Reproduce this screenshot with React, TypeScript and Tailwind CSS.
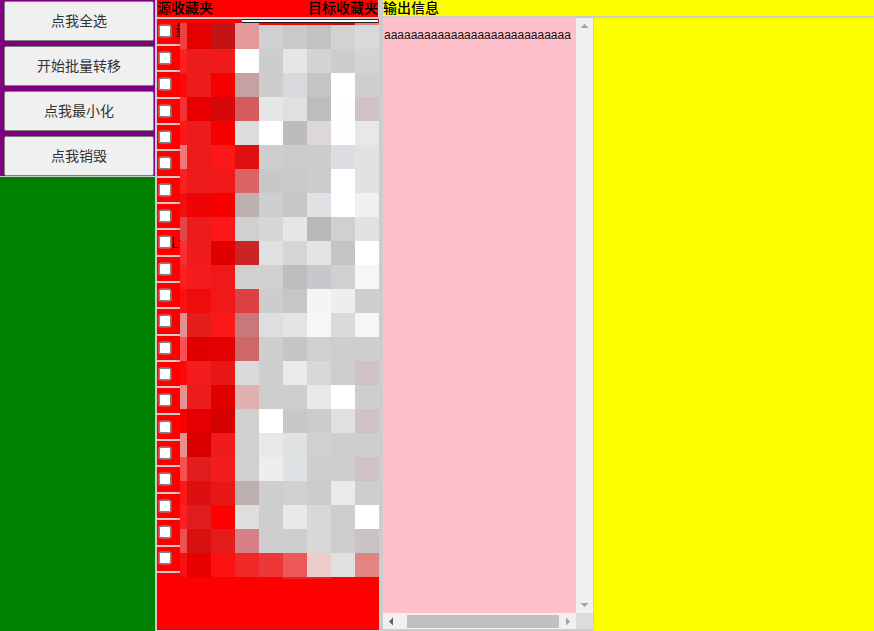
const tiles = [
  ['f04040', 'e50000', 'c21414', 'e49999', 'd0d0d0', 'c9c9c9', 'c2c2c2', 'd2d3d3', 'd9d9d9'],
  ['ff2020', 'ec1c1c', 'f01c1c', 'ffffff', 'cdcdcd', 'e6e6e4', 'd4d4d4', 'cdcdcd', 'd4d4d4'],
  ['fa0a0a', 'ec1c1c', 'f60000', 'c4a2a2', 'cdcdcd', 'd8d9dc', 'c4c4c4', 'ffffff', 'cecece'],
  ['f53030', 'e80000', 'd40808', 'd45c5c', 'e6e6e6', 'e0e0de', 'bcbdbe', 'fefefe', 'd0c2c4'],
  ['fc1818', 'ec1c1c', 'f60000', 'dcdcdc', 'ffffff', 'bcbcbc', 'dcd8d8', 'fefefe', 'e8e8e8'],
  ['f07878', 'ec1c1c', 'fc1818', 'e01010', 'cecece', 'cbcbc9', 'cccccc', 'dcdde0', 'e2e2e2'],
  ['fc2020', 'ec1c1c', 'f01818', 'dc6464', 'c8c8c8', 'c9c9c7', 'cccccc', 'ffffff', 'e2e2e2'],
  ['f01010', 'ee0404', 'f60000', 'bdb0b0', 'cecece', 'c8c7c5', 'e0e1e4', 'ffffff', 'f0f0f0'],
  ['e04848', 'ec1c1c', 'fc1818', 'd0d0d0', 'd6d6d6', 'e6e6e4', 'b8b8b6', 'd0d0d0', 'e2e2e2'],
  ['f83030', 'f01c1c', 'e00000', 'cc2424', 'e0e0e0', 'd4d6d4', 'e4e4e4', 'c4c4c4', 'ffffff'],
  ['fc2020', 'f41c1c', 'f01818', 'd0d0d0', 'd0d0d0', 'bebebc', 'c8c8cc', 'd0d0d0', 'f6f6f6'],
  ['fa1010', 'ee0c0c', 'f01818', 'dc4040', 'cdcdcd', 'c6c6c6', 'f4f5f7', 'eeeeee', 'cecece'],
  ['e09090', 'e41c1c', 'fc1818', 'c87878', 'dedede', 'e4e4e2', 'f6f6f6', 'dadada', 'f6f6f6'],
  ['fc5050', 'e00000', 'e40000', 'cc6868', 'cecece', 'c4c6c4', 'd0d0d2', 'cecece', 'cecece'],
  ['fa0a0a', 'f41c1c', 'e81818', 'dadada', 'cecece', 'eaeae8', 'd8d8d8', 'cecece', 'd0c2c4'],
  ['e89090', 'ec1c1c', 'e00000', 'e0b0b0', 'cecece', 'cecece', 'e8e8ea', 'ffffff', 'cecece'],
  ['f80000', 'e40000', 'd40000', 'd0d0d0', 'ffffff', 'c8c8c8', 'cccccc', 'e0e0e0', 'd0c2c4'],
  ['e89090', 'd80000', 'f01c1c', 'd0d0d0', 'e8e8e8', 'e0e2e0', 'ced0d2', 'cecece', 'cecece'],
  ['f85050', 'e01c1c', 'f41c1c', 'd0d0d0', 'eeeeee', 'dee2e4', 'cecece', 'cecece', 'd0c2c4'],
  ['fc1818', 'dc1010', 'e81818', 'beb0b0', 'cecece', 'd0d0ce', 'cccccc', 'eaeaea', 'cecece'],
  ['fc2020', 'e01c1c', 'ff0000', 'dedede', 'cecece', 'e8eae8', 'd8d8d8', 'cecece', 'ffffff'],
  ['f05050', 'd81010', 'e41c1c', 'd48086', 'cecece', 'cecece', 'd8d8d8', 'cecece', 'c8c4c4'],
  ['f81010', 'e80000', 'fc1010', 'f02828', 'ec3838', 'ee5858', 'eccccc', 'e0e0e0', 'e28484'],
];

const topStrip = ['f04040', 'e50000', 'c21414', 'e49999', 'ff0000', 'ff0000', 'ff0000', 'c40c0c', 'e08080'];
const bottomStrip = ['ff0000', 'ff0000', 'ff0000', 'ff0000', 'ff0000', 'f02020', 'f02020', 'ff0000', 'ff0000'];

const buttons = ['点我全选', '开始批量转移', '点我最小化', '点我销毁'];

const labels: Record<number, { text: string; className: string }> = {
  0: { text: '量', className: 'pl-[18px] -mt-[4px]' },
  8: { text: 'Lf', className: 'pl-[14px] -mt-[2px]' },
};

function TileRow({ colors, className }: { colors: string[]; className: string }) {
  return (
    <div className={`grid grid-cols-[7px_repeat(8,24px)] ${className}`}>
      {colors.map((c, i) => (
        <div key={i} style={{ backgroundColor: `#${c}` }} />
      ))}
    </div>
  );
}

function Arrow({ points, className }: { points: string; className: string }) {
  return (
    <svg width="9" height="9" viewBox="0 0 9 9" className={className}>
      <polygon points={points} />
    </svg>
  );
}

export default function App() {
  return (
    <div className="flex h-[631px] w-[874px] overflow-hidden bg-[#cccccc] font-['Noto_Sans_CJK_SC','Liberation_Sans',sans-serif] text-[14px] text-black">
      <aside className="flex w-[155px] flex-col">
        <div className="flex h-[176px] flex-col gap-[5px] bg-[#800080] pl-1 pt-px">
          {buttons.map((b) => (
            <button
              key={b}
              className="h-10 w-[150px] rounded-[2px] border border-[#808080] bg-[#f0f0f0] pb-[2px] text-[14px] leading-none text-[#333]"
            >
              {b}
            </button>
          ))}
        </div>
        <div className="mt-px flex-1 bg-[#008000]" />
      </aside>

      <section className="ml-[2px] flex h-[630px] w-[222px] flex-col">
        <div className="mr-px flex h-[17px] items-start justify-between bg-[#ff0000] font-medium leading-[14px]">
          <span>源收藏夹</span>
          <span>目标收藏夹</span>
        </div>
        <div className="mt-[2px] flex flex-1 bg-[#ff0000]">
          <ul className="w-[23px] pt-[0.65px]">
            {tiles.slice(0, 21).map((_, i) => (
              <li
                key={i}
                className="flex h-[26.35px] items-start overflow-hidden whitespace-nowrap border-b-2 border-[#cccccc] pt-[5.85px]"
              >
                <input
                  type="checkbox"
                  className="m-0 ml-[1.5px] h-[12px] w-[12px] shrink-0 appearance-none rounded-[2px] border border-[#808080] bg-white shadow-[0_0_0_0.5px_#999]"
                />
                {labels[i] && (
                  <span className={`-ml-[13.5px] leading-[16px] text-[#200] ${labels[i].className}`}>{labels[i].text}</span>
                )}
              </li>
            ))}
          </ul>
          <div className="flex w-[199px] flex-col">
            <div className="ml-[62px] h-1 w-[136px] border-y border-[#222] bg-white" />
            <TileRow colors={topStrip} className="h-[2px]" />
            {tiles.map((row, i) => (
              <TileRow key={i} colors={row} className="h-6" />
            ))}
            <TileRow colors={bottomStrip} className="h-[2px]" />
          </div>
        </div>
      </section>

      <section className="ml-1 flex h-full flex-1 flex-col">
        <div className="h-4 bg-[#ffff00] font-medium leading-[14px]">输出信息</div>
        <div className="mt-[2px] flex min-h-0 flex-1">
          <div className="mb-[2px] flex w-[210px] flex-col">
            <div className="flex min-h-0 flex-1">
              <div className="w-[193px] overflow-hidden bg-[#ffc0cb] pl-px pt-[10px] font-['Liberation_Sans',sans-serif] text-[12px] leading-[14px] text-[#111]">
                aaaaaaaaaaaaaaaaaaaaaaaaaaaa
              </div>
              <div className="flex w-[17px] flex-col items-center justify-between bg-[#f0f0f0] py-1">
                <Arrow points="4.5,2 8.5,6 0.5,6" className="fill-[#a3a3a3]" />
                <Arrow points="0.5,3 8.5,3 4.5,7" className="fill-[#a3a3a3]" />
              </div>
            </div>
            <div className="flex h-4">
              <div className="flex w-[193px] items-center bg-[#f0f0f0]">
                <Arrow points="6,0.5 6,8.5 2,4.5" className="ml-[4px] fill-[#606060]" />
                <div className="ml-[11px] h-[13px] w-[152px] bg-[#c0c0c0]" />
                <Arrow points="3,0.5 7,4.5 3,8.5" className="ml-[4px] fill-[#a3a3a3]" />
              </div>
              <div className="w-[17px] bg-[#dcdcdc]" />
            </div>
          </div>
          <div className="ml-px flex-1 bg-[#ffff00]" />
        </div>
      </section>
    </div>
  );
}
